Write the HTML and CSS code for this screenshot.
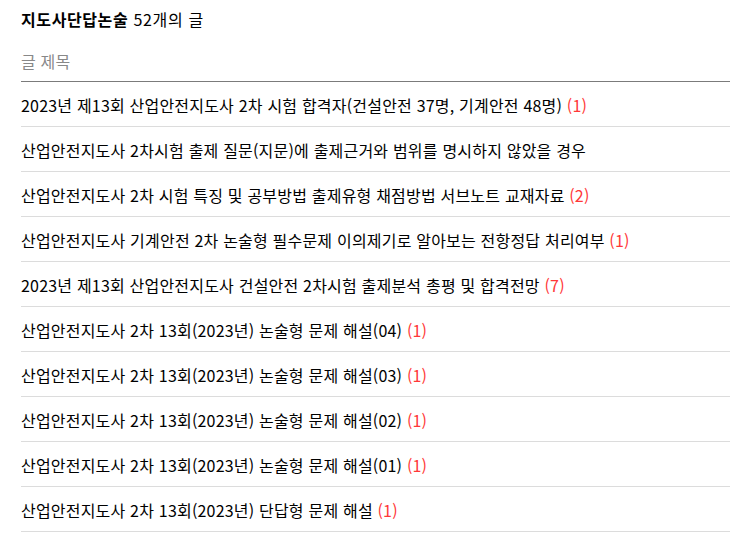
FILE: index.html
```html
<!DOCTYPE html>
<html lang="ko">
<head>
<meta charset="utf-8">
<link rel="stylesheet" href="styles.css">
</head>
<body>
<div class="board">
  <h2 class="board-title"><strong>지도사단답논술</strong> 52개의 글</h2>
  <div class="list-head">글 제목</div>
  <ul class="list">
    <li class="row">2023년 제13회 산업안전지도사 2차 시험 합격자(건설안전 37명, 기계안전 48명) <span class="cnt">(1)</span></li>
    <li class="row">산업안전지도사 2차시험 출제 질문(지문)에 출제근거와 범위를 명시하지 않았을 경우</li>
    <li class="row">산업안전지도사 2차 시험 특징 및 공부방법 출제유형 채점방법 서브노트 교재자료 <span class="cnt">(2)</span></li>
    <li class="row">산업안전지도사 기계안전 2차 논술형 필수문제 이의제기로 알아보는 전항정답 처리여부 <span class="cnt">(1)</span></li>
    <li class="row">2023년 제13회 산업안전지도사 건설안전 2차시험 출제분석 총평 및 합격전망 <span class="cnt">(7)</span></li>
    <li class="row">산업안전지도사 2차 13회(2023년) 논술형 문제 해설(04) <span class="cnt">(1)</span></li>
    <li class="row">산업안전지도사 2차 13회(2023년) 논술형 문제 해설(03) <span class="cnt">(1)</span></li>
    <li class="row">산업안전지도사 2차 13회(2023년) 논술형 문제 해설(02) <span class="cnt">(1)</span></li>
    <li class="row">산업안전지도사 2차 13회(2023년) 논술형 문제 해설(01) <span class="cnt">(1)</span></li>
    <li class="row">산업안전지도사 2차 13회(2023년) 단답형 문제 해설 <span class="cnt">(1)</span></li>
  </ul>
</div>
</body>
</html>
```
FILE: styles.css
```css
html, body {
  margin: 0;
  padding: 0;
  background: #fff;
}
body {
  font-family: "Noto Sans CJK KR", "Noto Sans", sans-serif;
  font-size: 16px;
  letter-spacing: 0.2px;
  color: #000;
}
.board {
  padding: 8px 0 0 21px;
}
.board-title {
  margin: 0;
  font-size: 16px;
  font-weight: normal;
  letter-spacing: 0.7px;
  line-height: 22px;
}
.board-title strong {
  font-weight: bold;
  letter-spacing: 0.6px;
}
.list-head {
  margin-top: 21px;
  height: 31px;
  line-height: 21px;
  color: #888;
  border-bottom: 1px solid #7b7b7b;
  box-sizing: border-box;
}
.list {
  list-style: none;
  margin: 0;
  padding: 0;
}
.row {
  height: 45px;
  box-sizing: border-box;
  border-bottom: 1px solid #dcdcdc;
  padding-top: 1px;
  display: flex;
  align-items: center;
  white-space: pre;
}
.cnt {
  color: #ff3838;
}
```
